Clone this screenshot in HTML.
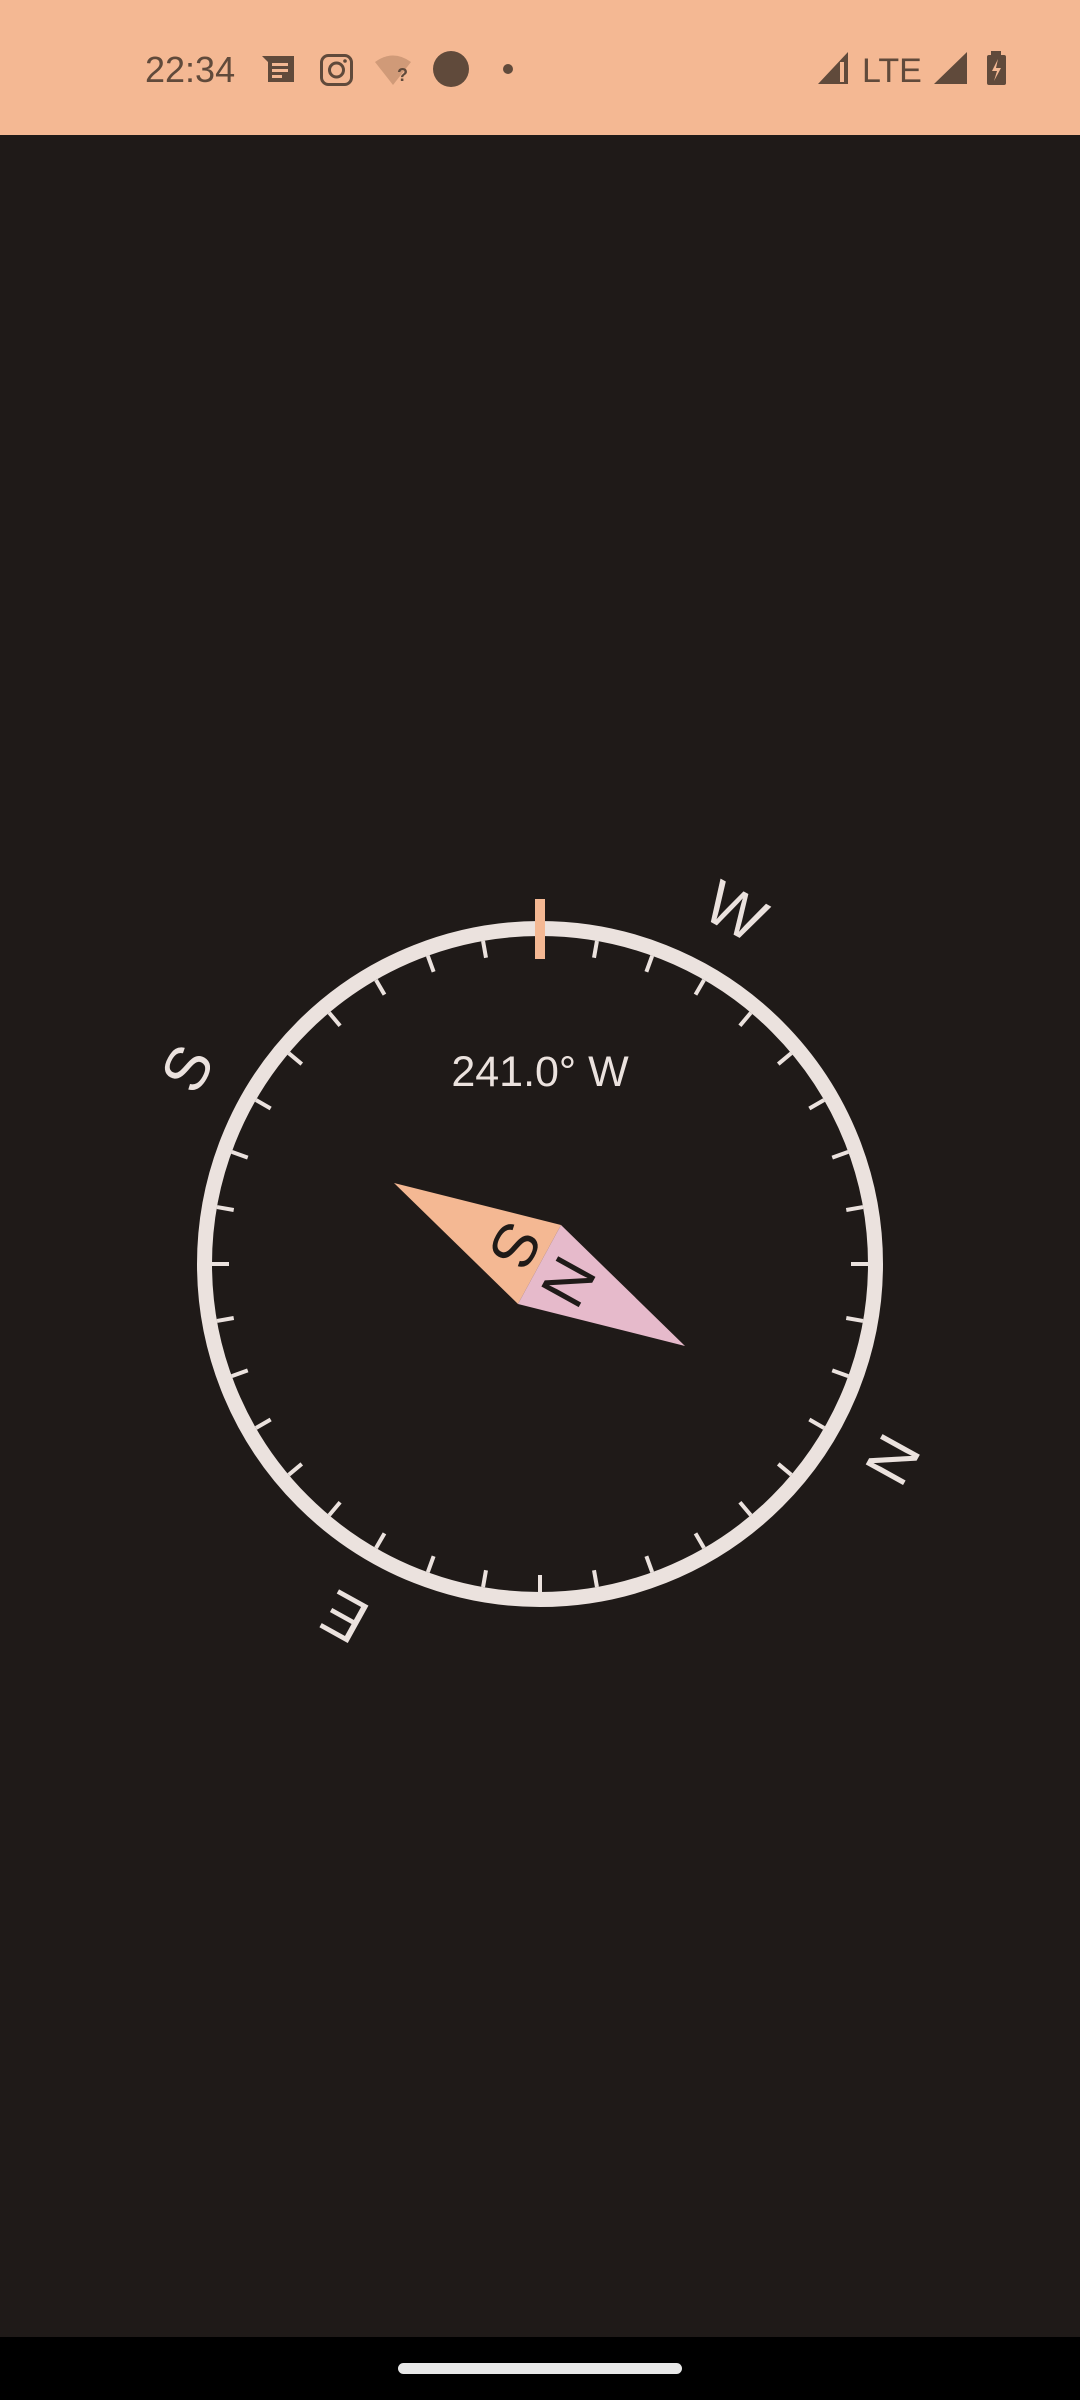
<!DOCTYPE html>
<html><head><meta charset="utf-8"><style>
html,body{margin:0;padding:0;}
body{width:1080px;height:2400px;background:#1f1a18;overflow:hidden;position:relative;font-family:"Liberation Sans",sans-serif;}
</style></head><body>
<svg width="1080" height="2400" viewBox="0 0 1080 2400" xmlns="http://www.w3.org/2000/svg" style="position:absolute;left:0;top:0">
<rect x="0" y="0" width="1080" height="135" fill="#f4b893"/>
<rect x="0" y="2337" width="1080" height="63" fill="#000"/>
<rect x="398" y="2363" width="284" height="11" rx="5.5" fill="#e8e8e8"/>
<g fill="#604a3b">
<text x="145" y="82" font-size="36" font-family="Liberation Sans" fill="#604a3b">22:34</text>
<path d="M262 56 h32 v26 h-26 v-20 z"/>
<rect x="272" y="63" width="16" height="3" fill="#f4b893"/>
<rect x="272" y="69" width="16" height="3" fill="#f4b893"/>
<rect x="272" y="75" width="10" height="3" fill="#f4b893"/>
<rect x="321.5" y="55.5" width="30" height="29" rx="7" fill="none" stroke="#604a3b" stroke-width="3"/>
<circle cx="336.5" cy="70" r="7" fill="none" stroke="#604a3b" stroke-width="3"/>
<circle cx="345" cy="61" r="1.8"/>
<path d="M375 62 Q393 49 411 62 L393 85 Z" fill="#d09a78"/>
<text x="397" y="81" font-size="18" font-weight="bold" fill="#604a3b">?</text>
<circle cx="451" cy="69" r="18"/>
<circle cx="508" cy="69" r="5"/>
<path d="M818 84 L848 52 V84 Z"/>
<rect x="840" y="62" width="4" height="20" fill="#f4b893"/>
<text x="862" y="82" font-size="34" fill="#604a3b">LTE</text>
<path d="M934 84 L967 52 V84 Z"/>
<rect x="991" y="51" width="10" height="4"/>
<rect x="987" y="55" width="19" height="30" rx="2"/>
<path d="M998 59 L992 71 H997 L994 81 L1001 68 H996 Z" fill="#f4b893"/>
</g>
<circle cx="540" cy="1264" r="335.5" fill="none" stroke="#ebe2de" stroke-width="15"/>
<g stroke="#ebe2de" stroke-width="4">
<line x1="540" y1="936" x2="540" y2="953" transform="rotate(0 540 1264)"/>
<line x1="540" y1="936" x2="540" y2="953" transform="rotate(10 540 1264)"/>
<line x1="540" y1="936" x2="540" y2="953" transform="rotate(20 540 1264)"/>
<line x1="540" y1="936" x2="540" y2="953" transform="rotate(30 540 1264)"/>
<line x1="540" y1="936" x2="540" y2="953" transform="rotate(40 540 1264)"/>
<line x1="540" y1="936" x2="540" y2="953" transform="rotate(50 540 1264)"/>
<line x1="540" y1="936" x2="540" y2="953" transform="rotate(60 540 1264)"/>
<line x1="540" y1="936" x2="540" y2="953" transform="rotate(70 540 1264)"/>
<line x1="540" y1="936" x2="540" y2="953" transform="rotate(80 540 1264)"/>
<line x1="540" y1="936" x2="540" y2="953" transform="rotate(90 540 1264)"/>
<line x1="540" y1="936" x2="540" y2="953" transform="rotate(100 540 1264)"/>
<line x1="540" y1="936" x2="540" y2="953" transform="rotate(110 540 1264)"/>
<line x1="540" y1="936" x2="540" y2="953" transform="rotate(120 540 1264)"/>
<line x1="540" y1="936" x2="540" y2="953" transform="rotate(130 540 1264)"/>
<line x1="540" y1="936" x2="540" y2="953" transform="rotate(140 540 1264)"/>
<line x1="540" y1="936" x2="540" y2="953" transform="rotate(150 540 1264)"/>
<line x1="540" y1="936" x2="540" y2="953" transform="rotate(160 540 1264)"/>
<line x1="540" y1="936" x2="540" y2="953" transform="rotate(170 540 1264)"/>
<line x1="540" y1="936" x2="540" y2="953" transform="rotate(180 540 1264)"/>
<line x1="540" y1="936" x2="540" y2="953" transform="rotate(190 540 1264)"/>
<line x1="540" y1="936" x2="540" y2="953" transform="rotate(200 540 1264)"/>
<line x1="540" y1="936" x2="540" y2="953" transform="rotate(210 540 1264)"/>
<line x1="540" y1="936" x2="540" y2="953" transform="rotate(220 540 1264)"/>
<line x1="540" y1="936" x2="540" y2="953" transform="rotate(230 540 1264)"/>
<line x1="540" y1="936" x2="540" y2="953" transform="rotate(240 540 1264)"/>
<line x1="540" y1="936" x2="540" y2="953" transform="rotate(250 540 1264)"/>
<line x1="540" y1="936" x2="540" y2="953" transform="rotate(260 540 1264)"/>
<line x1="540" y1="936" x2="540" y2="953" transform="rotate(270 540 1264)"/>
<line x1="540" y1="936" x2="540" y2="953" transform="rotate(280 540 1264)"/>
<line x1="540" y1="936" x2="540" y2="953" transform="rotate(290 540 1264)"/>
<line x1="540" y1="936" x2="540" y2="953" transform="rotate(300 540 1264)"/>
<line x1="540" y1="936" x2="540" y2="953" transform="rotate(310 540 1264)"/>
<line x1="540" y1="936" x2="540" y2="953" transform="rotate(320 540 1264)"/>
<line x1="540" y1="936" x2="540" y2="953" transform="rotate(330 540 1264)"/>
<line x1="540" y1="936" x2="540" y2="953" transform="rotate(340 540 1264)"/>
<line x1="540" y1="936" x2="540" y2="953" transform="rotate(350 540 1264)"/>
</g>
<rect x="535" y="899" width="10" height="60" fill="#f4b893"/>
<g fill="#ebe2de" font-size="62" text-anchor="middle" font-family="Liberation Sans">
<text x="540" y="882" transform="rotate(119 540 1264)">N</text>
<text x="540" y="882" transform="rotate(209 540 1264)">E</text>
<text x="540" y="882" transform="rotate(299 540 1264)">S</text>
<text x="540" y="882" transform="rotate(29 540 1264)">W</text>
</g>
<text x="540" y="1086" font-size="43" fill="#ebe2de" text-anchor="middle">241.0° W</text>
<polygon points="394,1183 561,1225 518,1304" fill="#f4b893"/>
<polygon points="685,1346 561,1225 518,1304" fill="#e6bacb"/>
<g fill="#1f1a18" font-size="62" text-anchor="middle">
<text x="0" y="0" transform="translate(516 1246) rotate(119) translate(0 22)">S</text>
<text x="0" y="0" transform="translate(569 1282) rotate(119) translate(0 22)">N</text>
</g>
</svg>
</body></html>
